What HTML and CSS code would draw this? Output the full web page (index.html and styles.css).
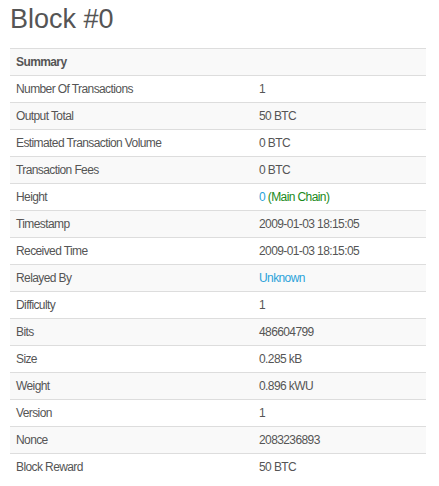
FILE: index.html
```html
<!DOCTYPE html>
<html>
<head>
<meta charset="utf-8">
<link rel="stylesheet" href="styles.css">
</head>
<body>
<div class="page">
  <h1 class="title">Block #0</h1>
  <table class="summary">
    <tbody>
      <tr><th colspan="2">Summary</th></tr>
      <tr><td>Number Of Transactions</td><td>1</td></tr>
      <tr><td>Output Total</td><td>50 BTC</td></tr>
      <tr><td>Estimated Transaction Volume</td><td>0 BTC</td></tr>
      <tr><td>Transaction Fees</td><td>0 BTC</td></tr>
      <tr><td>Height</td><td><a class="link" href="#">0</a> <span class="main">(Main Chain)</span></td></tr>
      <tr><td>Timestamp</td><td>2009-01-03 18:15:05</td></tr>
      <tr><td>Received Time</td><td>2009-01-03 18:15:05</td></tr>
      <tr><td>Relayed By</td><td><a class="link" href="#">Unknown</a></td></tr>
      <tr><td>Difficulty</td><td>1</td></tr>
      <tr><td>Bits</td><td>486604799</td></tr>
      <tr><td>Size</td><td>0.285 kB</td></tr>
      <tr><td>Weight</td><td>0.896 kWU</td></tr>
      <tr><td>Version</td><td>1</td></tr>
      <tr><td>Nonce</td><td>2083236893</td></tr>
      <tr><td>Block Reward</td><td>50 BTC</td></tr>
    </tbody>
  </table>
</div>
</body>
</html>
```
FILE: styles.css
```css
html, body {
  margin: 0;
  padding: 0;
  background: #fff;
}
body {
  font-family: "Liberation Sans", Arial, sans-serif;
  font-size: 12px;
  color: #555;
}
.page {
  padding: 0 13px 0 10px;
}
.title {
  margin: 4px 0 14px 0;
  font-size: 27px;
  font-weight: normal;
  line-height: 30px;
  color: #555;
}
.summary {
  width: 416px;
  border-collapse: collapse;
  border-spacing: 0;
}
.summary th,
.summary td {
  padding: 5px 6px;
  line-height: 16px;
  text-align: left;
  border-top: 1px solid #ddd;
  vertical-align: top;
  letter-spacing: -0.6px;
}
.summary th {
  font-weight: bold;
  color: #555;
}
.summary td:first-child {
  width: 231px;
}
.summary tr:nth-child(odd) {
  background: #f9f9f9;
}
.link {
  color: #2ba3d9;
  text-decoration: none;
}
.main {
  color: #1a8a1a;
}
```
